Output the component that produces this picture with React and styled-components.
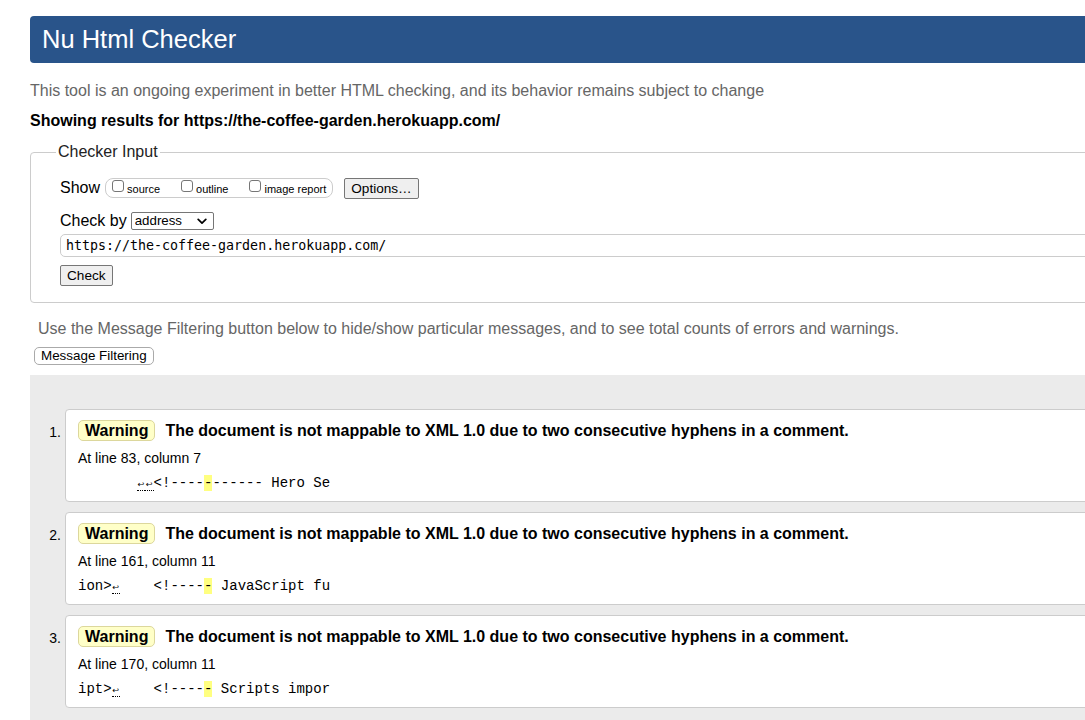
import React from "react";
import styled, { createGlobalStyle } from "styled-components";

const GlobalStyle = createGlobalStyle`
  html, body {
    margin: 0;
    padding: 0;
    overflow: hidden;
    background: #fff;
  }
  body {
    font-family: "Liberation Sans", Arial, sans-serif;
    font-size: 16px;
    color: #000;
  }
`;

const messages = [
  {
    line: 83,
    column: 7,
    before: "       ",
    returns: 2,
    lead: "<!----",
    mark: "-",
    after: "------ Hero Se",
  },
  {
    line: 161,
    column: 11,
    before: "ion>",
    returns: 1,
    lead: "    <!----",
    mark: "-",
    after: " JavaScript fu",
  },
  {
    line: 170,
    column: 11,
    before: "ipt>",
    returns: 1,
    lead: "    <!----",
    mark: "-",
    after: " Scripts impor",
  },
];

const App = () => {
  return (
    <>
      <GlobalStyle />
      <Page>
        <Header>
          <Title>Nu Html Checker</Title>
        </Header>
        <Intro>
          This tool is an ongoing experiment in better HTML checking, and its
          behavior remains subject to change
        </Intro>
        <Showing>Showing results for https://the-coffee-garden.herokuapp.com/</Showing>

        <Fieldset>
          <Legend>Checker Input</Legend>
          <ShowRow>
            <span>Show</span>
            <ShowGroup>
              <Option>
                <Checkbox type="checkbox" />
                <OptionLabel>source</OptionLabel>
              </Option>
              <Option>
                <Checkbox type="checkbox" />
                <OptionLabel>outline</OptionLabel>
              </Option>
              <Option>
                <Checkbox type="checkbox" />
                <OptionLabel>image report</OptionLabel>
              </Option>
            </ShowGroup>
            <GrayButton $ml={11}>Options…</GrayButton>
          </ShowRow>
          <CheckByRow>
            <span>Check by</span>
            <SelectWrap>
              <Select defaultValue="address">
                <option value="address">address</option>
                <option value="file">file upload</option>
                <option value="text">text input</option>
              </Select>
              <Chevron width="10" height="7" viewBox="0 0 10 7">
                <path
                  d="M1.2 1.4 L5 5.2 L8.8 1.4"
                  fill="none"
                  stroke="#000"
                  strokeWidth="1.7"
                  strokeLinecap="round"
                  strokeLinejoin="round"
                />
              </Chevron>
            </SelectWrap>
          </CheckByRow>
          <UrlInput defaultValue="https://the-coffee-garden.herokuapp.com/" />
          <GrayButton $mt={8}>Check</GrayButton>
        </Fieldset>

        <FilterNote>
          Use the Message Filtering button below to hide/show particular
          messages, and to see total counts of errors and warnings.
        </FilterNote>
        <FilterButton>Message Filtering</FilterButton>

        <Results>
          <List>
            {messages.map((m, i) => (
              <Item key={m.line}>
                <Num>{i + 1}.</Num>
                <Box>
                  <MessageRow>
                    <Badge>Warning</Badge>
                    <MessageText>
                      The document is not mappable to XML 1.0 due to two
                      consecutive hyphens in a comment.
                    </MessageText>
                  </MessageRow>
                  <Location>
                    At line {m.line}, column {m.column}
                  </Location>
                  <Extract>
                    {m.before}
                    {Array.from({ length: m.returns }).map((_, k) => (
                      <Return key={k}>↩</Return>
                    ))}
                    {m.lead}
                    <Mark>{m.mark}</Mark>
                    {m.after}
                  </Extract>
                </Box>
              </Item>
            ))}
          </List>
        </Results>
      </Page>
    </>
  );
};

const Page = styled.div`
  width: 1200px;
  padding: 16px 0 0 30px;
`;

const Header = styled.div`
  height: 47px;
  background: #29548a;
  border-radius: 4px;
  display: flex;
  align-items: center;
  padding-left: 12px;
`;

const Title = styled.h1`
  margin: 0;
  font-size: 25.5px;
  font-weight: normal;
  color: #fff;
  line-height: 30px;
  padding-bottom: 1px;
`;

const Intro = styled.p`
  margin: 19px 0 0;
  line-height: 18px;
  color: #666;
`;

const Showing = styled.p`
  margin: 12px 0 0;
  line-height: 18px;
  font-weight: bold;
`;

const Fieldset = styled.fieldset`
  margin: 13px 0 0;
  padding: 0 0 16px 29px;
  border: 1px solid #ccc;
  border-radius: 4px;
`;

const Legend = styled.legend`
  padding: 0 2px;
  margin-left: -4px;
  line-height: 18px;
  color: #222;
`;

const ShowRow = styled.div`
  display: flex;
  align-items: center;
  margin-top: 17px;
  height: 20px;
`;

const ShowGroup = styled.div`
  display: flex;
  align-items: center;
  height: 18px;
  margin-left: 5px;
  padding: 0 6px 0 6px;
  border: 1px solid #ccc;
  border-radius: 8px;
  gap: 21px;
`;

const Option = styled.label`
  display: flex;
  align-items: center;
  gap: 3px;
`;

const Checkbox = styled.input`
  appearance: none;
  margin: 0;
  width: 12px;
  height: 12px;
  border: 1px solid #767676;
  border-radius: 3px;
  background: #fff;
  position: relative;
  top: -2px;
`;

const OptionLabel = styled.span`
  font-size: 11px;
  line-height: 13px;
  position: relative;
  top: 1px;
`;

const GrayButton = styled.button`
  display: block;
  font-family: "Liberation Sans", Arial, sans-serif;
  font-size: 13.6px;
  color: #000;
  height: 21px;
  padding: 0 6px;
  margin-left: ${(p) => p.$ml || 0}px;
  margin-top: ${(p) => p.$mt || 0}px;
  background: #efefef;
  border: 1px solid #767676;
  border-radius: 2px;
  line-height: 19px;
`;

const CheckByRow = styled.div`
  display: flex;
  align-items: center;
  margin-top: 14px;
  height: 18px;
  gap: 4px;
`;

const SelectWrap = styled.div`
  position: relative;
  display: flex;
`;

const Select = styled.select`
  appearance: none;
  width: 83px;
  height: 18px;
  margin: 0;
  padding: 0 0 0 3px;
  font-family: "Liberation Sans", Arial, sans-serif;
  font-size: 13.3px;
  color: #000;
  background: #fff;
  border: 1px solid #767676;
  border-radius: 2px;
  line-height: 16px;
`;

const Chevron = styled.svg`
  position: absolute;
  right: 7px;
  top: 6px;
  pointer-events: none;
`;

const UrlInput = styled.input`
  display: block;
  box-sizing: border-box;
  width: 1200px;
  height: 23px;
  margin-top: 4px;
  padding: 0 5px;
  font-family: "DejaVu Sans Mono", Menlo, monospace;
  font-size: 13.3px;
  color: #000;
  border: 1px solid #ccc;
  border-radius: 5px;
  outline: none;
`;

const FilterNote = styled.p`
  margin: 17px 0 0 8px;
  line-height: 18px;
  color: #666;
`;

const FilterButton = styled.button`
  display: block;
  margin: 9px 0 0 4px;
  height: 18px;
  padding: 0 6px;
  font-family: "Liberation Sans", Arial, sans-serif;
  font-size: 13.4px;
  color: #000;
  background: #fff;
  border: 1px solid #aaa;
  border-radius: 5px;
  line-height: 16px;
`;

const Results = styled.div`
  margin-top: 10px;
  background: #ebebeb;
  padding: 34px 0 20px;
`;

const List = styled.ol`
  list-style: none;
  margin: 0;
  padding: 0;
`;

const Item = styled.li`
  display: flex;
  align-items: flex-start;
  margin-bottom: 10px;
`;

const Num = styled.span`
  width: 31px;
  padding-right: 4px;
  text-align: right;
  font-size: 14px;
  line-height: 16px;
  margin-top: 15px;
`;

const Box = styled.div`
  flex: 1;
  background: #fff;
  border: 1px solid #ccc;
  border-radius: 4px;
  padding: 10px 12px 10px 12px;
`;

const MessageRow = styled.div`
  display: flex;
  align-items: center;
  height: 21px;
`;

const Badge = styled.span`
  box-sizing: border-box;
  height: 21px;
  padding: 0 6px;
  background: #ffffc8;
  border: 1px solid #dcd79c;
  border-radius: 5px;
  font-weight: bold;
  line-height: 19px;
`;

const MessageText = styled.strong`
  margin-left: 10px;
  white-space: nowrap;
  line-height: 19px;
`;

const Location = styled.div`
  margin-top: 9px;
  font-size: 14px;
  line-height: 16px;
`;

const Extract = styled.div`
  margin-top: 9px;
  font-family: "Liberation Mono", "Courier New", monospace;
  font-size: 14px;
  line-height: 16px;
  white-space: pre;
`;

const Return = styled.span`
  display: inline-block;
  width: 8.4px;
  font-family: "DejaVu Sans", sans-serif;
  font-size: 8px;
  line-height: 10px;
  text-align: center;
  border-bottom: 1px dotted #000;
  vertical-align: baseline;
`;

const Mark = styled.span`
  background: #ffff80;
`;

export default App;
